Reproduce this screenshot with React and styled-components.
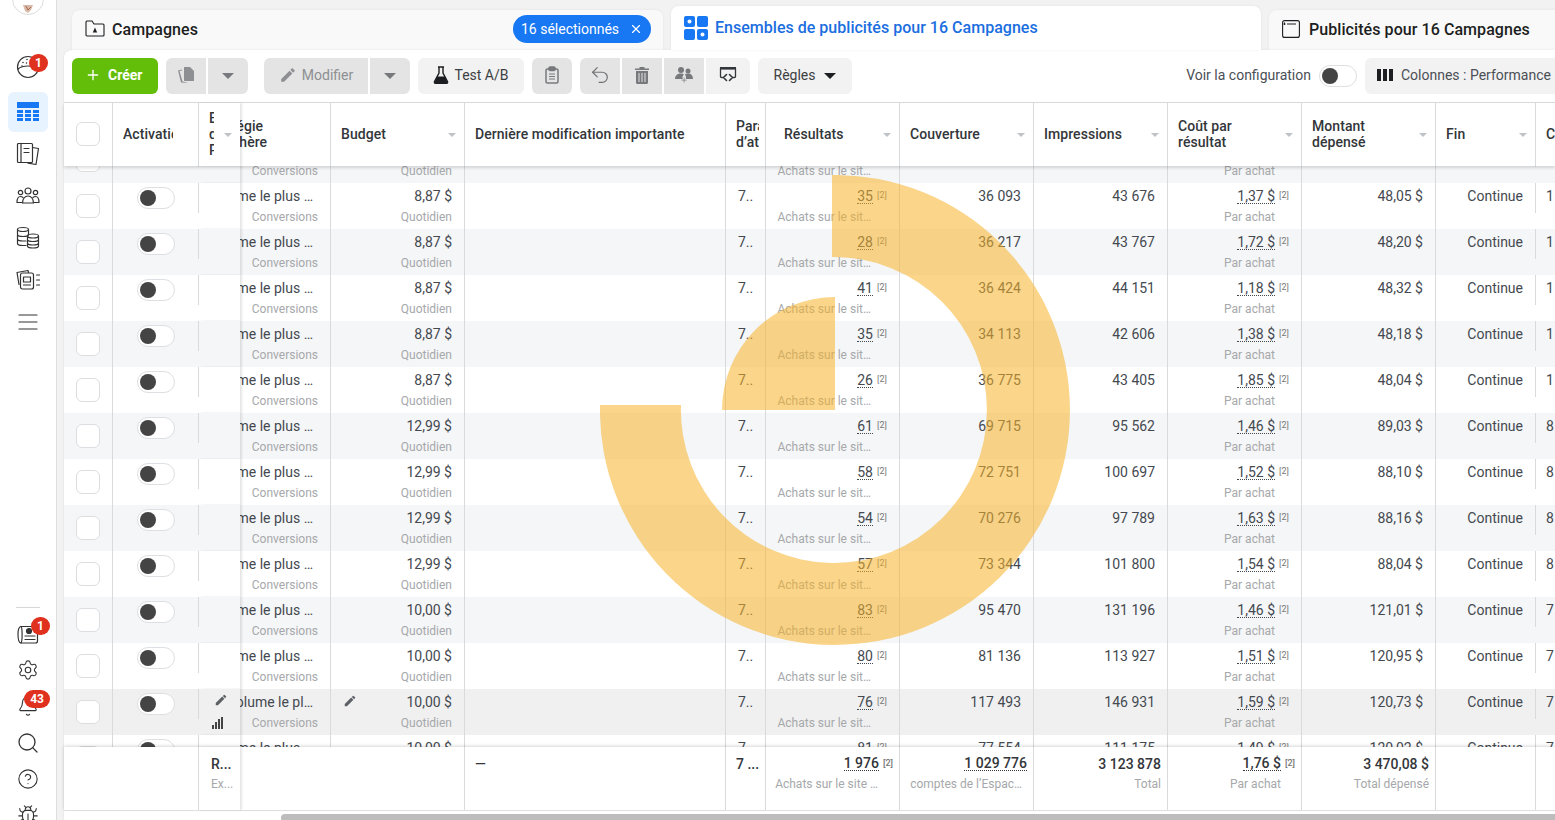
import React from 'react'
import styled, { createGlobalStyle } from 'styled-components'
import { Plus, X, Settings, Bell, Search, CircleHelp, Bug, Undo2 } from 'lucide-react'
import { MdEdit } from 'react-icons/md'

const COLS = '49px 86px 41px 91px 134px 261px 40px 134px 134px 134px 134px 134px 100px 1fr'
const LINE = '#d9dadc'

const rows = [
  ['8,87 $', '31', '35 880', '43 120', '1,55 $', '48,02 $', '1'],
  ['8,87 $', '35', '36 093', '43 676', '1,37 $', '48,05 $', '1'],
  ['8,87 $', '28', '36 217', '43 767', '1,72 $', '48,20 $', '1'],
  ['8,87 $', '41', '36 424', '44 151', '1,18 $', '48,32 $', '1'],
  ['8,87 $', '35', '34 113', '42 606', '1,38 $', '48,18 $', '1'],
  ['8,87 $', '26', '36 775', '43 405', '1,85 $', '48,04 $', '1'],
  ['12,99 $', '61', '69 715', '95 562', '1,46 $', '89,03 $', '8'],
  ['12,99 $', '58', '72 751', '100 697', '1,52 $', '88,10 $', '8'],
  ['12,99 $', '54', '70 276', '97 789', '1,63 $', '88,16 $', '8'],
  ['12,99 $', '57', '73 344', '101 800', '1,54 $', '88,04 $', '8'],
  ['10,00 $', '83', '95 470', '131 196', '1,46 $', '121,01 $', '7'],
  ['10,00 $', '80', '81 136', '113 927', '1,51 $', '120,95 $', '7'],
  ['10,00 $', '76', '117 493', '146 931', '1,59 $', '120,73 $', '7'],
  ['10,00 $', '81', '77 554', '111 175', '1,49 $', '120,02 $', '7'],
]

const GlobalStyle = createGlobalStyle`
  html, body {
    margin: 0;
    padding: 0;
    height: 100%;
    overflow: hidden;
    background: #f2f2f2;
    font-family: Roboto, 'Liberation Sans', sans-serif;
    font-size: 14px;
    color: #444950;
  }
  * { box-sizing: border-box; }
`

const Page = styled.div`
  position: relative;
  display: flex;
  width: 1555px;
  height: 820px;
  overflow: hidden;
`

const Sidebar = styled.nav`
  width: 57px;
  flex-shrink: 0;
  height: 820px;
  display: flex;
  flex-direction: column;
  align-items: center;
  background: #fff;
  border-right: 1px solid #dedede;
  overflow: hidden;
`

const Avatar = styled.div`
  width: 32px;
  height: 32px;
  margin-top: -17px;
  margin-bottom: 31px;
  flex-shrink: 0;
  border-radius: 50%;
  border: 1px solid #dcdcdc;
  background: #fff;
  display: flex;
  align-items: flex-end;
  justify-content: center;
`

const NavItem = styled.div`
  position: relative;
  width: 40px;
  height: ${p => (p.$small ? 36 : 40)}px;
  margin: ${p => (p.$small ? 0 : 1)}px 0;
  margin-bottom: ${p => (p.$gap ? 4 : p.$small ? 0 : 1)}px;
  display: flex;
  align-items: center;
  justify-content: center;
  flex-shrink: 0;
  border-radius: 6px;
  background: ${p => (p.$active ? '#e7f3ff' : 'transparent')};
  color: #333;
`

const Badge = styled.span`
  position: absolute;
  top: ${p => p.$top}px;
  right: ${p => p.$right}px;
  min-width: 19px;
  height: 18px;
  padding: 0 6px;
  border-radius: 10px;
  background: #e0301e;
  color: #fff;
  font-size: 12px;
  font-weight: 700;
  line-height: 18px;
  text-align: center;
`

const BottomGroup = styled.div`
  margin-top: auto;
  margin-bottom: -13px;
  display: flex;
  flex-direction: column;
  align-items: center;
  gap: 0.2px;
`

const NavDivider = styled.div`
  width: 24px;
  height: 1px;
  margin-bottom: 8px;
  background: #d8d8d8;
`

const Main = styled.main`
  flex: 1;
  min-width: 0;
  display: flex;
  flex-direction: column;
  padding-left: 7px;
`

const Tabs = styled.div`
  height: 50px;
  flex-shrink: 0;
  display: flex;
  align-items: flex-end;
  gap: 8px;
  padding-left: 8px;
`

const Tab = styled.div`
  height: ${p => (p.$active ? 44 : 40)}px;
  width: ${p => p.$width}px;
  flex-shrink: 0;
  display: flex;
  align-items: center;
  gap: ${p => p.$gap ?? 7}px;
  padding: ${p => (p.$active ? '0 0 0 13px' : '0 12px 2px 13px')};
  border-radius: 8px 8px 0 0;
  background: ${p => (p.$active ? '#fff' : '#f9f9f9')};
  box-shadow: 0 0 3px rgba(0, 0, 0, 0.06);
  position: relative;
  z-index: ${p => (p.$active ? 2 : 0)};
`

const TabLabel = styled.span`
  font-size: 16px;
  font-weight: 500;
  letter-spacing: ${p => (p.$active ? 0.02 : 0.07)}px;
  white-space: nowrap;
  color: ${p => (p.$active ? '#1b6ee0' : '#1c1e21')};
  margin-bottom: ${p => (p.$active ? 2 : 0)}px;
`

const Pill = styled.div`
  margin-left: auto;
  height: 28px;
  width: 138px;
  display: flex;
  align-items: center;
  justify-content: space-between;
  padding: 0 8px;
  border-radius: 14px;
  background: #1877f2;
  color: #fff;
  font-size: 14px;
`

const Card = styled.section`
  position: relative;
  z-index: 1;
  flex: 1;
  min-height: 0;
  display: flex;
  flex-direction: column;
  background: #fff;
  border-radius: 8px 0 0 0;
  box-shadow: 0 0 3px rgba(0, 0, 0, 0.08);
`

const Toolbar = styled.div`
  height: 53px;
  flex-shrink: 0;
  display: flex;
  align-items: center;
  gap: 8px;
  padding: 0 0 1px 8px;
  border-bottom: 1px solid ${LINE};
`

const Create = styled.button`
  width: 86px;
  height: 36px;
  display: flex;
  align-items: center;
  gap: 7px;
  padding: 0 0 2px 13px;
  border: 0;
  border-radius: 6px;
  background: #63be09;
  color: #fff;
  font: 700 14px Roboto, sans-serif;
`

const Group = styled.div`
  display: flex;
  gap: 2px;
  margin-left: ${p => (p.$push ? 8 : 0)}px;
`

const Tool = styled.div`
  width: ${p => p.$width || 40}px;
  height: 36px;
  flex-shrink: 0;
  display: flex;
  align-items: center;
  justify-content: center;
  gap: ${p => p.$gap ?? 8}px;
  padding-bottom: 2px;
  background: ${p => (p.$off ? '#e4e4e4' : '#f2f2f2')};
  color: ${p => (p.$off ? '#8d8f92' : '#3d3f42')};
  border-radius: ${p => (p.$solo ? '6px' : '0')};
  font-size: 14px;
  ${Group} > &:first-child { border-radius: 6px 0 0 6px; }
  ${Group} > &:last-child { border-radius: 0 6px 6px 0; }
`

const RightTools = styled.div`
  margin-left: auto;
  display: flex;
  align-items: center;
  gap: 8px;
`

const ConfigLabel = styled.span`
  font-size: 14px;
  color: #4b4f56;
  white-space: nowrap;
  margin-bottom: 2px;
`

const ToggleTrack = styled.div`
  width: 38px;
  height: 22px;
  flex-shrink: 0;
  padding: 2px;
  border: 1px solid #dddfe2;
  border-radius: 11px;
  background: #fff;
`

const ToggleKnob = styled.div`
  width: 16px;
  height: 16px;
  border-radius: 50%;
  background: #444;
`

const ColumnsButton = styled(Tool)`
  width: 190px;
  justify-content: flex-start;
  padding-left: 12px;
  border-radius: 6px 0 0 6px;
  white-space: nowrap;
  color: #4b4f56;
`

const Grid = styled.div`
  display: grid;
  grid-template-columns: ${COLS};
`

const Header = styled(Grid)`
  position: relative;
  z-index: 3;
  height: 63px;
  flex-shrink: 0;
  background: #fff;
  box-shadow: 0 2px 3px rgba(0, 0, 0, 0.14);
`

const HeadCell = styled.div`
  position: relative;
  min-width: 0;
  display: flex;
  align-items: center;
  justify-content: space-between;
  overflow: hidden;
  padding: 0 8px 2px ${p => p.$left ?? 10}px;
  border-right: ${p => (p.$noLine ? '0' : `1px solid ${LINE}`)};
  font-weight: 500;
  letter-spacing: 0.06px;
  line-height: 16px;
  color: #33363a;
  background: #fff;
`

const HeadText = styled.div`
  white-space: nowrap;
  flex-shrink: 0;
  margin-left: ${p => p.$pull || 0}px;
`

const ClippedHead = styled.div`
  width: ${p => p.$width}px;
  flex-shrink: 0;
  overflow: hidden;
  white-space: nowrap;
`

const StickyHead = styled(HeadCell)`
  z-index: 2;
  overflow: visible;
  border-right: 0;
  box-shadow: 2px 0 2px rgba(0, 0, 0, 0.1);
`

const Caret = styled.i`
  width: 0;
  height: 0;
  flex-shrink: 0;
  margin-top: 2px;
  border-left: ${p => (p.$big ? 6 : 4.5)}px solid transparent;
  border-right: ${p => (p.$big ? 6 : 4.5)}px solid transparent;
  border-top: ${p => (p.$big ? 6 : 4.5)}px solid ${p => p.$color || '#bfc2c6'};
`

const Body = styled.div`
  flex: 1;
  min-height: 0;
  overflow: hidden;
`

const BodyInner = styled.div`
  margin-top: -29px;
`

const Row = styled(Grid)`
  height: 46px;
  background: ${p => (p.$hover ? '#f0f0f0' : p.$stripe ? '#f5f6f7' : '#fff')};
`

const Cell = styled.div`
  position: relative;
  min-width: 0;
  display: flex;
  flex-direction: column;
  align-items: ${p => p.$align || 'flex-end'};
  overflow: hidden;
  padding: ${p => p.$top ?? 4}px 12px 0;
  border-right: ${p => (p.$noLine ? '0' : `1px solid ${LINE}`)};
`

const CheckCell = styled(Cell)`
  padding: 11px 0 0 12px;
  align-items: flex-start;
  overflow: visible;
`

const Check = styled.div`
  width: 24px;
  height: 24px;
  flex-shrink: 0;
  border: 1px solid #dcdee1;
  border-radius: 6px;
  background: #fff;
`

const HeadCheck = styled(Check)`
  margin-left: 2px;
`

const ToggleCell = styled(Cell)`
  align-items: center;
  padding: 4px 0 0;
  border-right: 0;
  &::after {
    content: '';
    position: absolute;
    top: 0;
    right: 0;
    width: 1px;
    height: 30px;
    background: ${LINE};
  }
`

const StickyCell = styled.div`
  position: relative;
  z-index: 2;
  display: flex;
  flex-direction: column;
  align-items: flex-end;
  padding: 4px 12px 0 0;
  background: inherit;
  box-shadow: 2px 0 2px rgba(0, 0, 0, 0.1);
`

const BarIcon = styled.svg`
  margin: 10px 5px 0 0;
`

const MainLine = styled.div`
  height: 18px;
  line-height: 18px;
  white-space: nowrap;
  flex-shrink: 0;
  margin-right: ${p => p.$right || 0}px;
  display: flex;
  align-items: center;
  align-self: ${p => (p.$wide ? 'stretch' : 'auto')};
  justify-content: flex-end;
`

const Sub = styled.div`
  height: 18px;
  margin-top: 3px;
  margin-right: ${p => p.$right || 0}px;
  line-height: 18px;
  font-size: 12px;
  color: #a6a8ab;
  white-space: nowrap;
  flex-shrink: 0;
`

const FootSub = styled(Sub)`
  margin-top: 2px;
  font-weight: 400;
`

const Pencil = styled(MdEdit)`
  margin-right: auto;
  margin-top: -2px;
  color: #5d6166;
`

const Dotted = styled.span`
  margin-top: 2px;
  line-height: 13px;
  border-bottom: 1px dotted #444950;
`

const Note = styled.sup`
  width: 10px;
  margin-left: 4px;
  margin-top: 3px;
  font-size: 9px;
  line-height: 10px;
  color: #777;
  align-self: flex-start;
  vertical-align: baseline;
`

const SideCell = styled(Cell)`
  align-items: flex-start;
  padding: 4px 0 0 10px;
  border-right: 0;
`

const FinCell = styled(ToggleCell)`
  align-items: flex-end;
  padding: 4px 13px 0 0;
`

const Footer = styled(Grid)`
  position: relative;
  z-index: 3;
  height: 63px;
  flex-shrink: 0;
  background: #fff;
  box-shadow: 0 -1px 3px rgba(0, 0, 0, 0.16);
  font-weight: 500;
`

const FootCell = styled.div`
  min-width: 0;
  grid-column: ${p => (p.$span ? `span ${p.$span}` : 'auto')};
  display: flex;
  flex-direction: column;
  align-items: ${p => p.$align || 'flex-end'};
  overflow: hidden;
  padding: 8px 6px 0 ${p => p.$left ?? 10}px;
  border-right: ${p => (p.$noLine ? '0' : `1px solid ${LINE}`)};
  color: #33363a;
`

const FootSticky = styled(FootCell)`
  position: relative;
  z-index: 2;
  overflow: visible;
  padding-left: 12px;
  border-right: 0;
  box-shadow: 2px 0 2px rgba(0, 0, 0, 0.1);
  background: #fff;
`

const FootDotted = styled.span`
  line-height: 13px;
  border-bottom: 1px dotted #33363a;
`

const ScrollTrack = styled.div`
  height: 10px;
  flex-shrink: 0;
  padding: 3px 0 0 217px;
  border-top: 1px solid #e6e6e6;
  background: #fff;
`

const ScrollThumb = styled.div`
  height: 8px;
  border-radius: 4px 0 0 4px;
  background: #bdbdbd;
`

const Donut = styled.svg`
  position: absolute;
  top: 175px;
  left: 600px;
  z-index: 5;
  pointer-events: none;
`

const Outline = ({ children, size = 24, box = 24, width = 1.2 }) => (
  <svg width={size} height={size} viewBox={`0 0 ${box} ${box}`} fill='none' stroke='#333' strokeWidth={width} strokeLinecap='round' strokeLinejoin='round'>
    {children}
  </svg>
)

const GaugeIcon = () => (
  <Outline>
    <circle cx='12' cy='12' r='10.5' />
    <path d='M2 14c3-2.5 6-3 10-3s7 .8 10 3' />
    <path d='M7 7.5h.01M11 4.5h.01M6 11h.01M10.5 8h.01' strokeWidth='1.6' />
  </Outline>
)

const TableIcon = () => (
  <svg width='22' height='20' viewBox='0 0 22 20' fill='#1877f2'>
    <rect width='22' height='6' />
    {[8, 12, 16].map(y =>
      [0, 8, 16].map(x => <rect key={`${x}-${y}`} x={x} y={y} width='6' height='3' />)
    )}
  </svg>
)

const PagesIcon = () => (
  <Outline>
    <path d='M16.5 5.5l6 1-2.5 16-8-1.3' />
    <rect x='1.5' y='1.5' width='15' height='19' rx='1' fill='#fff' />
    <path d='M5 1.5v19M8 6.5h5M8 10.5h5' />
  </Outline>
)

const PeopleIcon = () => (
  <Outline>
    <circle cx='12' cy='7' r='3' />
    <circle cx='4.5' cy='8.5' r='2.2' />
    <circle cx='19.5' cy='8.5' r='2.2' />
    <path d='M6.5 19c0-4 2.3-7 5.5-7s5.5 3 5.5 7z' />
    <path d='M6.5 18.5H1c0-3.5 1.5-6 3.5-6 1 0 1.8.4 2.5 1M17.5 18.5H23c0-3.5-1.5-6-3.5-6-1 0-1.8.4-2.5 1' />
  </Outline>
)

const CoinsIcon = () => (
  <Outline>
    <ellipse cx='7' cy='3.5' rx='5.5' ry='2' />
    <path d='M1.5 3.5v14c0 1.2 2.5 2 5.5 2h3M1.5 8.5c0 1.2 2.5 2 5.5 2s5.5-.8 5.5-2M1.5 13c0 1.2 2.5 2 5.5 2h3M12.5 3.5V9' />
    <ellipse cx='17' cy='10' rx='5.5' ry='2' />
    <path d='M11.5 10v10c0 1.2 2.5 2 5.5 2s5.5-.8 5.5-2V10M11.5 13.5c0 1.2 2.5 2 5.5 2s5.5-.8 5.5-2M11.5 17c0 1.2 2.5 2 5.5 2s5.5-.8 5.5-2' />
  </Outline>
)

const AdsIcon = () => (
  <Outline>
    <path d='M3 16.5L1 4.5 12 2.5l.5 2' />
    <rect x='4.5' y='5' width='13' height='16' rx='2' fill='#fff' />
    <rect x='7.5' y='9' width='7' height='5' />
    <path d='M7.5 17h7M20.5 7h3M20.5 12h3M20.5 17h3' />
  </Outline>
)

const MenuIcon = () => (
  <Outline>
    <path d='M3 5h18M3 12h18M3 19h18' />
  </Outline>
)

const NewsIcon = () => (
  <Outline>
    <path d='M5 4.5C2.5 5 2 7 2 12s.5 9 3 9h14.5c1.5 0 2-1 2-2V4.5z' />
    <path d='M5 4.5c1.5 1 1.5 15 0 16.5' />
    <circle cx='13' cy='9' r='2.5' fill='#333' />
    <path d='M9 14h10M9 17.5h10' />
  </Outline>
)

const FolderIcon = () => (
  <svg width='20' height='18' viewBox='0 0 20 18' fill='none' stroke='#1c1e21' strokeWidth='1.1'>
    <path d='M1 15V2a1 1 0 011-1h5l2 3h9a1 1 0 011 1v10a1 1 0 01-1 1H2a1 1 0 01-1-1z' />
    <path d='M10 7.5l2.2 5H7.8z' fill='#1c1e21' stroke='none' />
  </svg>
)

const GridTabIcon = () => (
  <svg width='24' height='24' viewBox='0 0 24 24'>
    <rect width='11' height='11' rx='2' fill='#1877f2' />
    <rect x='13' width='11' height='11' rx='2' fill='#1877f2' />
    <rect y='13' width='11' height='11' rx='2' fill='#1877f2' />
    <rect x='13' y='13' width='11' height='11' rx='2' fill='#1877f2' />
    <circle cx='5.5' cy='5.5' r='2' fill='#fff' />
    <circle cx='18.5' cy='18.5' r='2' fill='#fff' />
  </svg>
)

const AdTabIcon = () => (
  <svg width='18' height='18' viewBox='0 0 18 18' fill='none' stroke='#1c1e21' strokeWidth='1.1'>
    <rect x='.6' y='.6' width='16.8' height='16.8' rx='2' />
    <path d='M5 4h9M2.5 2.5V5M1.5 4h2' />
  </svg>
)

const CopyIcon = () => (
  <svg width='18' height='18' viewBox='0 0 18 18' fill='#8d8f92'>
    <path d='M7 1h6l4 4v10H7z' />
    <path d='M5 3.5L1 4.5l3 12 7 .5-5.5-1.5-3-10.5 2.5-.6z' />
  </svg>
)

const FlaskIcon = () => (
  <svg width='16' height='18' viewBox='0 0 16 18' fill='none' stroke='#1c1e21' strokeWidth='1.4'>
    <path d='M5 1h6M6 1v6L1.5 15.5c-.4 1 .1 1.8 1 1.8h11c.9 0 1.4-.8 1-1.8L10 7V1' />
    <path d='M4 10.5h8l3 6.8H1z' fill='#1c1e21' stroke='none' />
  </svg>
)

const ClipboardIcon = () => (
  <svg width='14' height='18' viewBox='0 0 14 18' fill='none' stroke='#77797c' strokeWidth='1.5'>
    <rect x='1' y='3' width='12' height='14' rx='1.5' />
    <rect x='4' y='1' width='6' height='3.5' rx='1' fill='#77797c' />
    <path d='M4 8h6M4 10.5h6M4 13h6' strokeWidth='1' />
  </svg>
)

const TrashIcon = () => (
  <svg width='14' height='18' viewBox='0 0 14 18' fill='#77797c'>
    <path d='M0 2.5h14V4H0zM4.5 1h5v1.5h-5z' />
    <path d='M1 5h12v11.5a1.5 1.5 0 01-1.5 1.5h-9A1.5 1.5 0 011 16.5zM3.5 7v9h1V7zm3 0v9h1V7zm3 0v9h1V7z' fillRule='evenodd' />
  </svg>
)

const AudienceIcon = () => (
  <svg width='18' height='16' viewBox='0 0 18 16' fill='#77797c'>
    <circle cx='6' cy='3' r='3' />
    <circle cx='13' cy='4' r='2.5' />
    <path d='M0 12c0-3.5 2.5-5.5 6-5.5 1.2 0 2.3.2 3 .8-1 .8-1.5 2-1.5 3 0 .8.1 1.2.3 1.7z' />
    <path d='M10 7c1-.3 2-.5 3-.5 3 0 5 2 5 5.5h-7c0-2-.2-3.5-1-5z' />
    <path d='M8.5 10.5h1.2v2h2v1.2h-2v2H8.5v-2h-2v-1.2h2z' stroke='#e4e4e4' strokeWidth='.5' />
  </svg>
)

const SwapIcon = () => (
  <svg width='18' height='18' viewBox='0 0 18 18' fill='none' stroke='#33363a' strokeWidth='1.6' strokeLinecap='round' strokeLinejoin='round'>
    <path d='M3.5 11.5h-1a1 1 0 01-1-1v-8h15v8a1 1 0 01-1 1h-1' strokeWidth='1.3' />
    <path d='M1 1h16v2.500H1z' fill='#33363a' stroke='none' />
    <path d='M7.5 8.500l-3 3 3 3M10.500 8.500l3 3-3 3' />
  </svg>
)

const ColumnsIcon = () => (
  <svg width='16' height='12' viewBox='0 0 16 12' fill='#1c1e21'>
    <rect width='4' height='12' />
    <rect x='6' width='4' height='12' />
    <rect x='12' width='4' height='12' />
  </svg>
)

const Toggle = () => (
  <ToggleTrack>
    <ToggleKnob />
  </ToggleTrack>
)

const DataRow = ({ data, index }) => {
  const [budget, result, reach, impressions, cost, spent, last] = data
  const hover = index === 12
  return (
    <Row $stripe={index % 2 === 0} $hover={hover}>
      <CheckCell>
        <Check />
      </CheckCell>
      <ToggleCell>
        <Toggle />
      </ToggleCell>
      <StickyCell>
        {hover && <MdEdit size={14} color='#5d6166' />}
        {hover && (
          <BarIcon width='11' height='12' viewBox='0 0 11 12' fill='#444'>
            <rect y='8' width='2' height='4' />
            <rect x='3' y='5' width='2' height='7' />
            <rect x='6' y='2' width='2' height='10' />
            <rect x='9' width='2' height='12' />
          </BarIcon>
        )}
      </StickyCell>
      <Cell>
        <MainLine $right={5}>{hover ? 'Volume le pl…' : 'Volume le plus …'}</MainLine>
        <Sub>Conversions</Sub>
      </Cell>
      <Cell>
        <MainLine $wide>
          {hover && <Pencil size={14} />}
          {budget}
        </MainLine>
        <Sub>Quotidien</Sub>
      </Cell>
      <Cell />
      <Cell $align='flex-start' $top={5}>7..</Cell>
      <Cell>
        <MainLine>
          <Dotted>{result}</Dotted>
          <Note>[2]</Note>
        </MainLine>
        <Sub $right={16}>Achats sur le sit…</Sub>
      </Cell>
      <Cell>
        <MainLine>{reach}</MainLine>
      </Cell>
      <Cell>
        <MainLine>{impressions}</MainLine>
      </Cell>
      <Cell>
        <MainLine>
          <Dotted>{cost}</Dotted>
          <Note>[2]</Note>
        </MainLine>
        <Sub $right={14}>Par achat</Sub>
      </Cell>
      <Cell>
        <MainLine>{spent}</MainLine>
      </Cell>
      <FinCell>
        <MainLine>Continue</MainLine>
      </FinCell>
      <SideCell>
        <MainLine>{last}</MainLine>
      </SideCell>
    </Row>
  )
}

const App = () => (
  <Page>
    <GlobalStyle />
    <Sidebar>
      <Avatar>
        <svg width='16' height='9' viewBox='0 0 16 9'>
          <path d='M3 0h10l-2 5-3 3-3-2z' fill='#d9b9a8' />
          <path d='M6 1l2 4 3-3' fill='none' stroke='#a8644c' strokeWidth='1' />
        </svg>
      </Avatar>
      <NavItem $gap>
        <GaugeIcon />
        <Badge $top={7} $right={0}>1</Badge>
      </NavItem>
      <NavItem $active>
        <TableIcon />
      </NavItem>
      <NavItem>
        <PagesIcon />
      </NavItem>
      <NavItem>
        <PeopleIcon />
      </NavItem>
      <NavItem>
        <CoinsIcon />
      </NavItem>
      <NavItem>
        <AdsIcon />
      </NavItem>
      <NavItem>
        <MenuIcon />
      </NavItem>
      <BottomGroup>
        <NavDivider />
        <NavItem $small>
          <NewsIcon />
          <Badge $top={1} $right={-2}>1</Badge>
        </NavItem>
        <NavItem $small>
          <Settings size={22} strokeWidth={1.2} />
        </NavItem>
        <NavItem $small>
          <Bell size={22} strokeWidth={1.2} />
          <Badge $top={2} $right={-2}>43</Badge>
        </NavItem>
        <NavItem $small>
          <Search size={24} strokeWidth={1.3} />
        </NavItem>
        <NavItem $small>
          <CircleHelp size={22} strokeWidth={1.2} />
        </NavItem>
        <NavItem $small>
          <Bug size={22} strokeWidth={1.2} />
        </NavItem>
      </BottomGroup>
    </Sidebar>
    <Main>
      <Tabs>
        <Tab $width={591}>
          <FolderIcon />
          <TabLabel>Campagnes</TabLabel>
          <Pill>
            16 sélectionnés
            <X size={14} strokeWidth={2} />
          </Pill>
        </Tab>
        <Tab $active $width={590}>
          <GridTabIcon />
          <TabLabel $active>Ensembles de publicités pour 16 Campagnes</TabLabel>
        </Tab>
        <Tab $width={300} $gap={9}>
          <AdTabIcon />
          <TabLabel>Publicités pour 16 Campagnes</TabLabel>
        </Tab>
      </Tabs>
      <Card>
        <Toolbar>
          <Create>
            <Plus size={16} strokeWidth={2} />
            Créer
          </Create>
          <Group>
            <Tool $off><CopyIcon /></Tool>
            <Tool $off><Caret $big $color='#77797c' /></Tool>
          </Group>
          <Group $push>
            <Tool $off $width={104} $gap={5}>
              <MdEdit size={18} />
              Modifier
            </Tool>
            <Tool $off><Caret $big $color='#77797c' /></Tool>
          </Group>
          <Tool $solo $width={106} $gap={5}>
            <FlaskIcon />
            Test A/B
          </Tool>
          <Tool $off $solo><ClipboardIcon /></Tool>
          <Group>
            <Tool $off><Undo2 size={22} strokeWidth={1.3} color='#6f7174' /></Tool>
            <Tool $off><TrashIcon /></Tool>
            <Tool $off><AudienceIcon /></Tool>
            <Tool $width={44}><SwapIcon /></Tool>
          </Group>
          <Tool $solo $width={94} $gap={9}>
            Règles
            <Caret $big $color='#1c1e21' />
          </Tool>
          <RightTools>
            <ConfigLabel>Voir la configuration</ConfigLabel>
            <Toggle />
            <ColumnsButton>
              <ColumnsIcon />
              Colonnes : Performance
            </ColumnsButton>
          </RightTools>
        </Toolbar>
        <Header>
          <HeadCell $left={10}>
            <HeadCheck />
          </HeadCell>
          <HeadCell>
            <ClippedHead $width={50}>Activation</ClippedHead>
          </HeadCell>
          <StickyHead>
            <ClippedHead $width={5}>
              Enchère<br />de la<br />Page
            </ClippedHead>
            <Caret />
          </StickyHead>
          <HeadCell $left={0}>
            <HeadText $pull={-34}>
              Stratégie<br />d’enchère
            </HeadText>
          </HeadCell>
          <HeadCell>
            <HeadText>Budget</HeadText>
            <Caret />
          </HeadCell>
          <HeadCell>
            <HeadText>Dernière modification importante</HeadText>
          </HeadCell>
          <HeadCell>
            <ClippedHead $width={23}>
              Paramètre<br />d’attribution
            </ClippedHead>
          </HeadCell>
          <HeadCell $left={18}>
            <HeadText>Résultats</HeadText>
            <Caret />
          </HeadCell>
          <HeadCell>
            <HeadText>Couverture</HeadText>
            <Caret />
          </HeadCell>
          <HeadCell>
            <HeadText>Impressions</HeadText>
            <Caret />
          </HeadCell>
          <HeadCell>
            <HeadText>Coût par<br />résultat</HeadText>
            <Caret />
          </HeadCell>
          <HeadCell>
            <HeadText>Montant<br />dépensé</HeadText>
            <Caret />
          </HeadCell>
          <HeadCell>
            <HeadText>Fin</HeadText>
            <Caret />
          </HeadCell>
          <HeadCell $left={10} $noLine>
            <HeadText>Calendrier</HeadText>
          </HeadCell>
        </Header>
        <Body>
          <BodyInner>
            {rows.map((data, i) => (
              <DataRow key={i} data={data} index={i} />
            ))}
          </BodyInner>
        </Body>
        <Footer>
          <FootCell $span={2} />
          <FootSticky $align='flex-start'>
            <MainLine>R...</MainLine>
            <FootSub>Ex...</FootSub>
          </FootSticky>
          <FootCell $span={2} />
          <FootCell $align='flex-start'>
            <MainLine>—</MainLine>
          </FootCell>
          <FootCell $align='flex-start'>
            <MainLine>7 ...</MainLine>
          </FootCell>
          <FootCell>
            <MainLine>
              <FootDotted>1 976</FootDotted>
              <Note>[2]</Note>
            </MainLine>
            <FootSub $right={15}>Achats sur le site …</FootSub>
          </FootCell>
          <FootCell>
            <MainLine>
              <FootDotted>1 029 776</FootDotted>
            </MainLine>
            <FootSub $right={5}>comptes de l’Espac…</FootSub>
          </FootCell>
          <FootCell>
            <MainLine>3 123 878</MainLine>
            <FootSub>Total</FootSub>
          </FootCell>
          <FootCell>
            <MainLine>
              <FootDotted>1,76 $</FootDotted>
              <Note>[2]</Note>
            </MainLine>
            <FootSub $right={14}>Par achat</FootSub>
          </FootCell>
          <FootCell>
            <MainLine>3 470,08 $</MainLine>
            <FootSub>Total dépensé</FootSub>
          </FootCell>
          <FootCell />
          <FootCell $noLine />
        </Footer>
        <ScrollTrack>
          <ScrollThumb />
        </ScrollTrack>
      </Card>
    </Main>
    <Donut width='470' height='470' viewBox='0 0 470 470' fill='rgba(245, 178, 42, 0.55)'>
      <path d='M232 0A235 235 0 1 1 0 230H81A153 153 0 1 0 232 82Z' />
      <path d='M235 235H122A113 113 0 0 1 235 122Z' />
    </Donut>
  </Page>
)

export default App
